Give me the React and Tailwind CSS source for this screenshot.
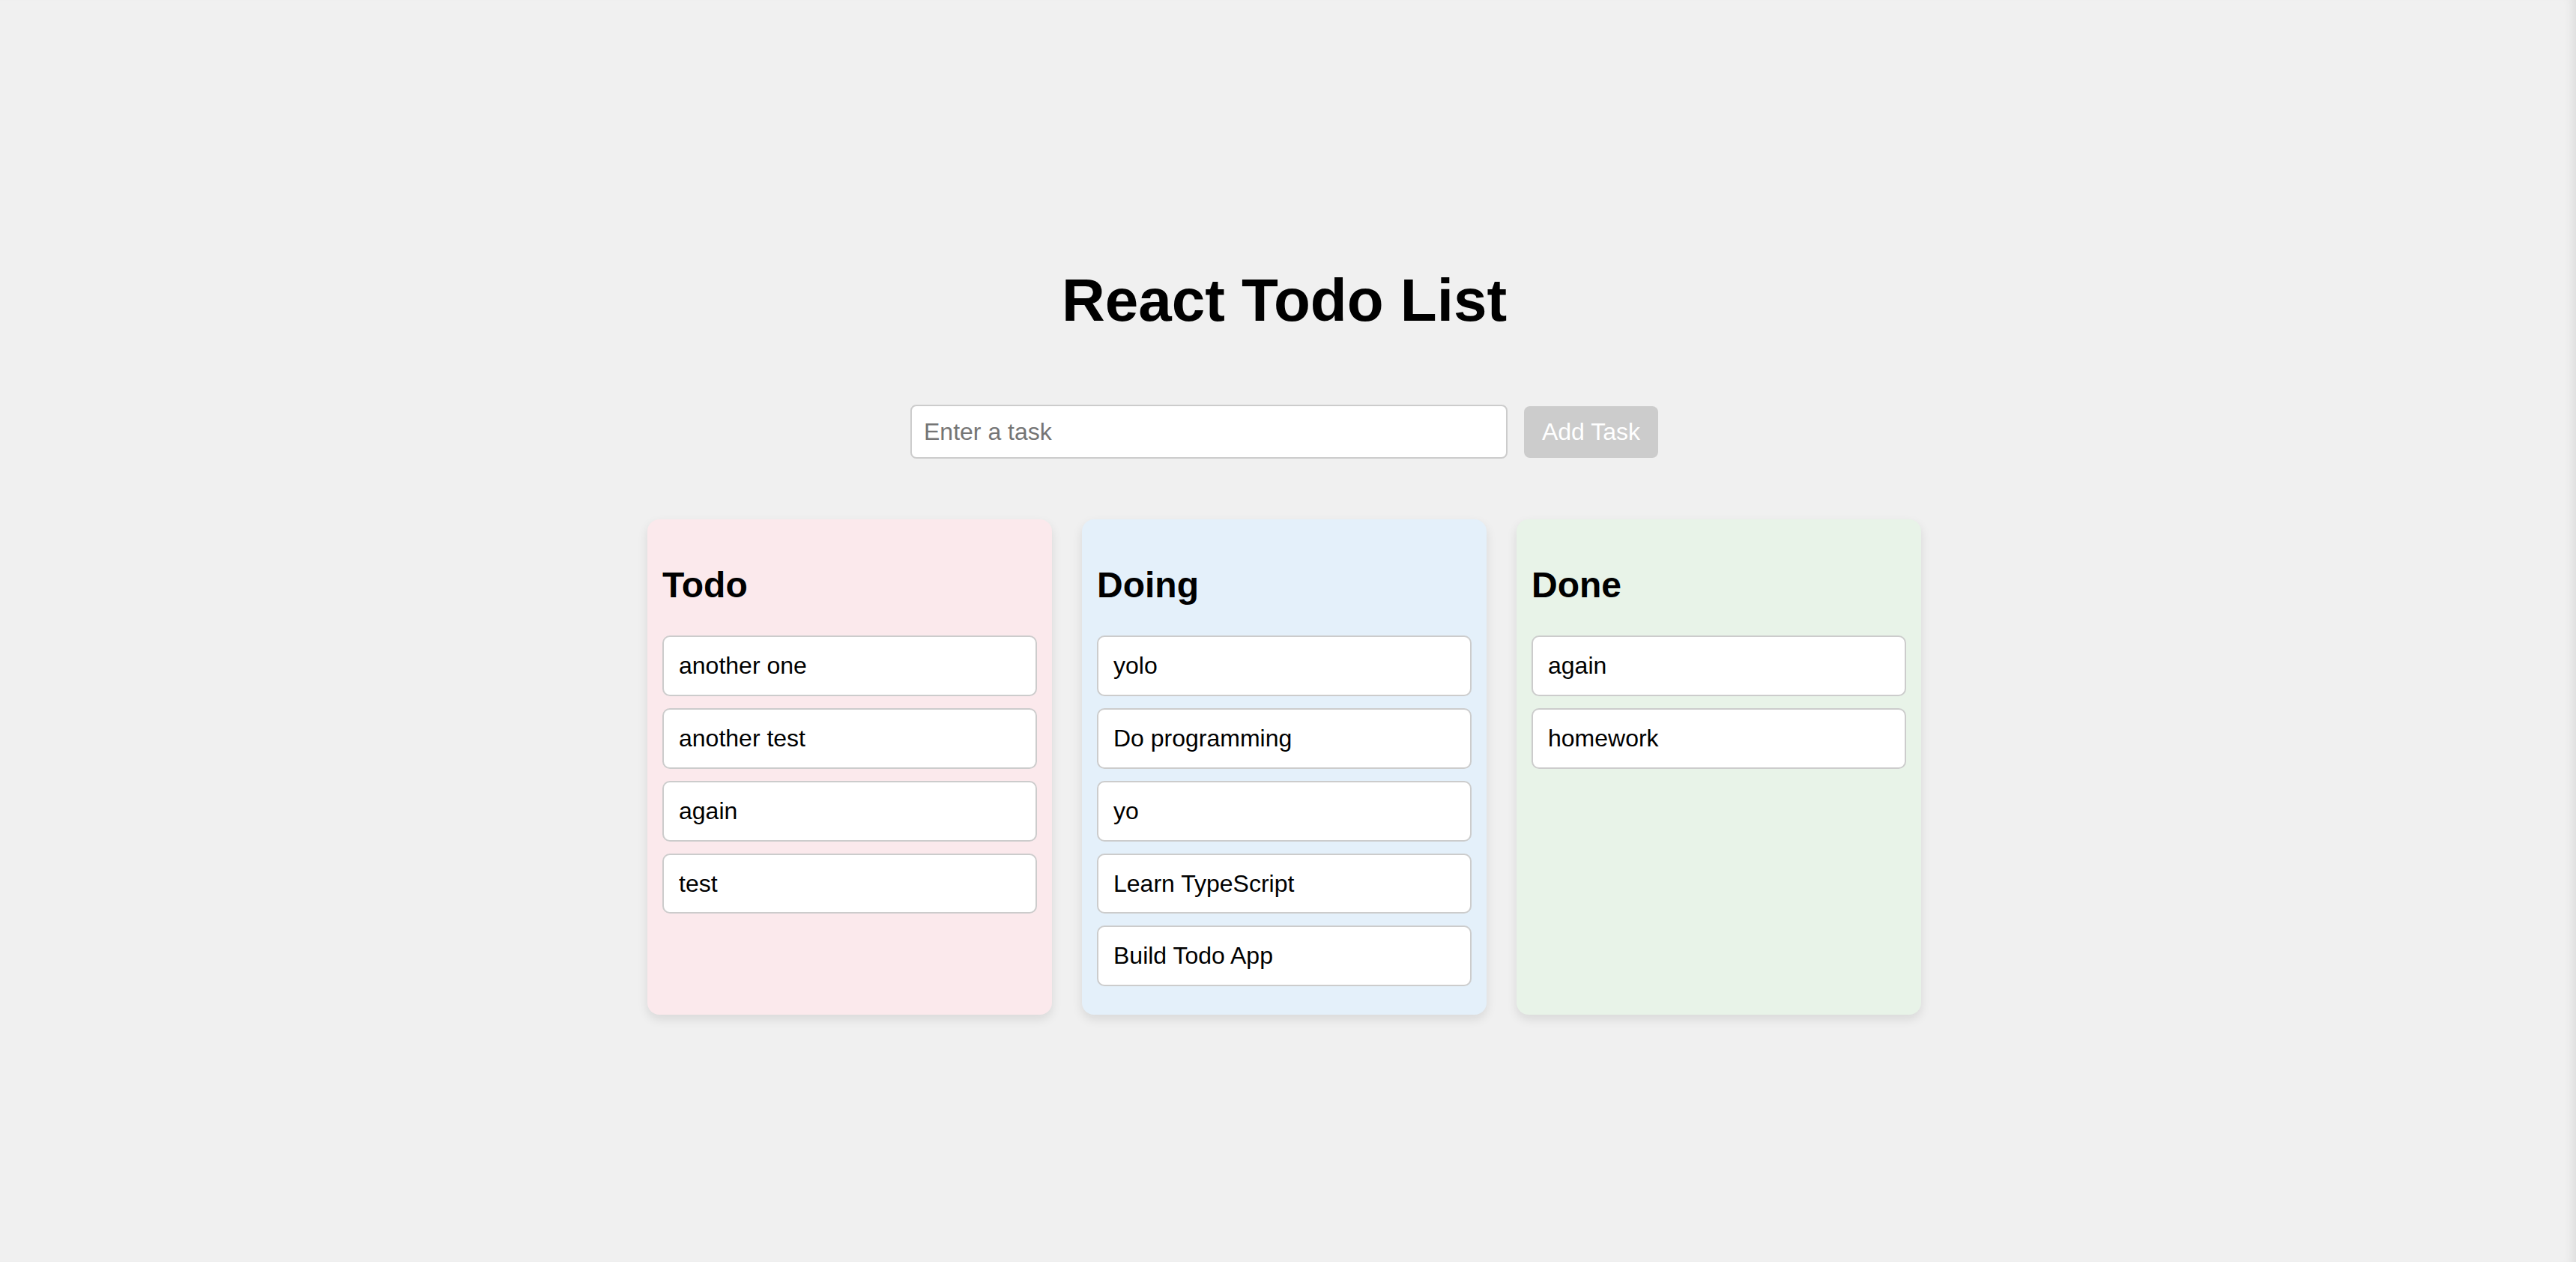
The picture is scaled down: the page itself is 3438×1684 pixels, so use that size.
import React, { useState } from "react";

const initialColumns = [
  { title: "Todo", bg: "bg-[#fbe9ec]", items: ["another one", "another test", "again", "test"] },
  {
    title: "Doing",
    bg: "bg-[#e4f0fa]",
    items: ["yolo", "Do programming", "yo", "Learn TypeScript", "Build Todo App"],
  },
  { title: "Done", bg: "bg-[#e8f3e8]", items: ["again", "homework"] },
];

const Column = ({ title, bg, items }) => (
  <div className={`w-[540px] ${bg} rounded-[16px] px-[20px] pt-[20px] pb-[38px] shadow-[0_6px_14px_rgba(0,0,0,0.1)]`}>
    <h2 className="text-[48px] font-bold leading-[1.15] mt-[40px] mb-[40px]">{title}</h2>
    <div className="flex flex-col gap-[16px]">
      {items.map((item, i) => (
        <div
          key={i}
          className="bg-white border-2 border-[#cccccc] rounded-[10px] px-[20px] py-[20px] text-[32px] leading-[1.15]"
        >
          {item}
        </div>
      ))}
    </div>
  </div>
);

const App = () => {
  const [task, setTask] = useState("");

  return (
    <div className="min-h-screen w-full bg-[#f0f0f0] text-black font-['Liberation_Sans',Arial,sans-serif] shadow-[inset_-14px_0_14px_-10px_rgba(0,0,0,0.09)] pr-[10px]">
      <div className="flex flex-col items-center pt-[355px]">
        <h1 className="text-[80px] font-bold leading-[1.15]">React Todo List</h1>

        <div className="flex items-center gap-[22px] mt-[93px]">
          <input
            type="text"
            placeholder="Enter a task"
            value={task}
            onChange={(e) => setTask(e.target.value)}
            className="w-[797px] h-[72px] bg-white border-2 border-[#cccccc] rounded-[8px] px-[16px] text-[32px] outline-none placeholder:text-[#757575]"
          />
          <button
            type="button"
            disabled={!task}
            className="w-[179px] h-[69px] bg-[#cccccc] text-white text-[32px] rounded-[8px]"
          >
            Add Task
          </button>
        </div>

        <div className="flex items-stretch gap-[40px] mt-[81px]">
          {initialColumns.map((col) => (
            <Column key={col.title} {...col} />
          ))}
        </div>
      </div>
    </div>
  );
};

export default App;
